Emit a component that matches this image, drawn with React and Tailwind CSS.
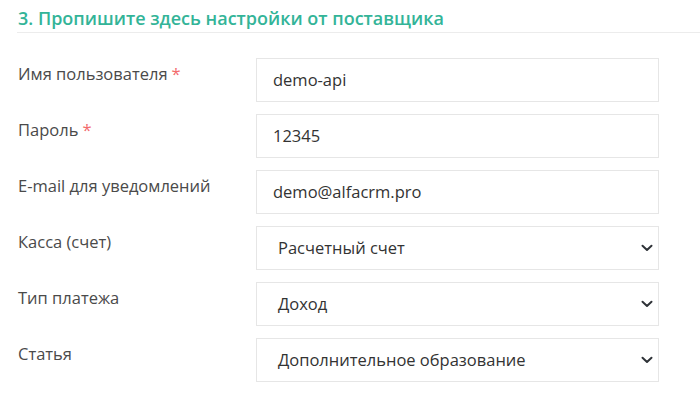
import React from 'react';

const fields = [
    { label: 'Имя пользователя', required: true, value: 'demo-api' },
    { label: 'Пароль', required: true, value: '12345' },
    { label: 'E-mail для уведомлений', value: 'demo@alfacrm.pro' },
    { label: 'Касса (счет)', value: 'Расчетный счет', select: true },
    { label: 'Тип платежа', value: 'Доход', select: true },
    { label: 'Статья', value: 'Дополнительное образование', select: true },
];

function Chevron() {
    return (
        <svg width="12" height="8" viewBox="0 0 12 8" className="shrink-0">
            <path d="M1.5 1.8 L6 6 L10.5 1.8" fill="none" stroke="#2f3338" strokeWidth="2" strokeLinecap="round" strokeLinejoin="round" />
        </svg>
    );
}

export default function App() {
    return (
        <div className="w-[700px] h-[393px] bg-white pl-[17px] pt-[6px] font-['Open_Sans',sans-serif]">
            <h2 className="text-[18px] font-semibold text-[#33b498] leading-[25px] pl-[1px] pb-[1px] border-b border-[#ececec]">
                3. Пропишите здесь настройки от поставщика
            </h2>

            <div className="flex flex-col gap-[12px] pt-[25px]">
                {fields.map((f) => (
                    <div key={f.label} className="flex items-start">
                        <div className="w-[239px] pl-[1px] pt-[4px] text-[16.5px] text-[#4a4a4a] leading-[24px]">
                            {f.label}
                            {f.required && <span className="text-[#f36b6b] ml-[4px]">*</span>}
                        </div>
                        <div className={`w-[403px] h-[44px] border border-[#e6e6e6] flex items-center text-[16.5px] text-[#333] ${f.select ? 'pl-[21px] pr-[5px] justify-between' : 'pl-[16px]'}`}>
                            <span>{f.value}</span>
                            {f.select && <Chevron />}
                        </div>
                    </div>
                ))}
            </div>
        </div>
    );
}
